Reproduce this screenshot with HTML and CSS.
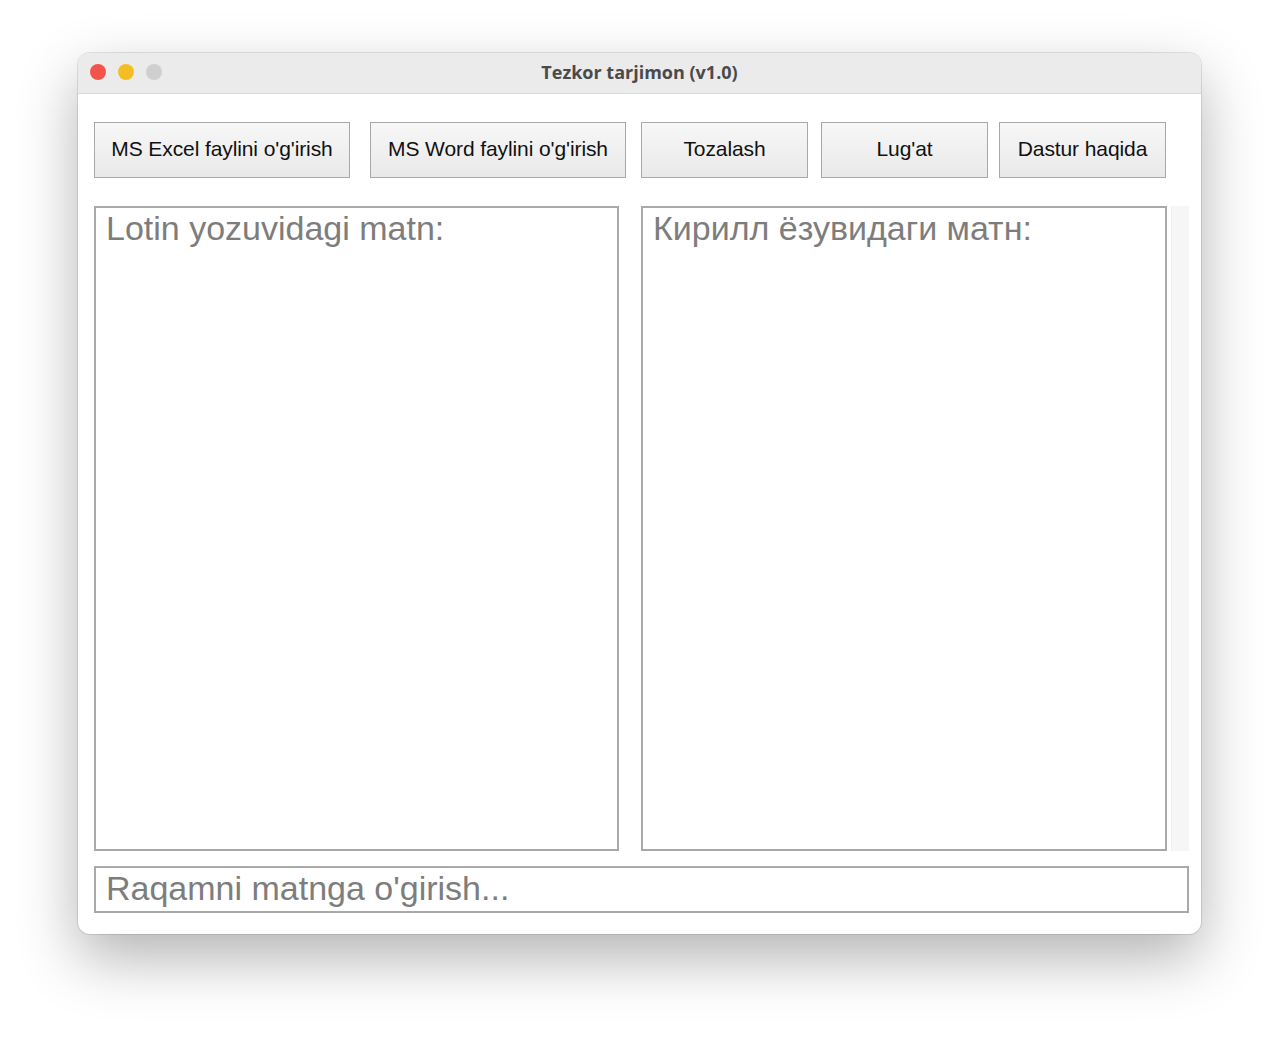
FILE: index.html
```html
<!DOCTYPE html>
<html>
<head>
<meta charset="utf-8">
<link rel="stylesheet" href="styles.css">
</head>
<body>
<div class="window">
  <div class="titlebar">
    <div class="lights">
      <span class="light red"></span>
      <span class="light yellow"></span>
      <span class="light gray"></span>
    </div>
    <div class="title">Tezkor tarjimon (v1.0)</div>
  </div>
  <div class="content">
    <div class="toolbar">
      <div class="btn wide b1">MS Excel faylini o'g'irish</div>
      <div class="btn wide b2">MS Word faylini o'g'irish</div>
      <div class="btn narrow b3">Tozalash</div>
      <div class="btn narrow b4">Lug'at</div>
      <div class="btn narrow b5">Dastur haqida</div>
    </div>
    <div class="panes">
      <div class="pane left">Lotin yozuvidagi matn:</div>
      <div class="pane right">Кирилл ёзувидаги матн:</div>
      <div class="scroll"></div>
    </div>
    <div class="input">Raqamni matnga o'girish...</div>
  </div>
</div>
</body>
</html>
```
FILE: styles.css
```css
html, body {
  margin: 0;
  padding: 0;
  background: #ffffff;
}
body {
  width: 1280px;
  height: 1039px;
  overflow: hidden;
  padding-top: 53px;
  padding-left: 78px;
  box-sizing: border-box;
}
.window {
  width: 1123px;
  height: 881px;
  border-radius: 12px;
  background: #ffffff;
  box-shadow: 0 24px 60px rgba(0,0,0,0.3), 0 0 0 1px rgba(0,0,0,0.1);
  overflow: hidden;
  display: flex;
  flex-direction: column;
}
.titlebar {
  height: 40px;
  background: #ebebeb;
  border-bottom: 1px solid #dadada;
  position: relative;
  display: flex;
  align-items: center;
  justify-content: center;
  flex: none;
}
.lights {
  position: absolute;
  left: 12px;
  top: 11px;
  display: flex;
  gap: 12px;
}
.light {
  width: 16px;
  height: 16px;
  border-radius: 50%;
  display: block;
}
.red { background: #f2544c; }
.yellow { background: #f5bd24; }
.gray { background: #cfcfcf; }
.title {
  font-family: "Open Sans", "Liberation Sans", sans-serif;
  font-weight: 700;
  font-size: 18px;
  color: #4a4a4a;
  margin-top: -2px;
}
.content {
  padding: 28px 0 0 16px;
  display: flex;
  flex-direction: column;
}
.toolbar {
  display: flex;
  height: 56px;
}
.btn {
  box-sizing: border-box;
  height: 56px;
  border: 1px solid #a8a8a8;
  background: linear-gradient(#f7f7f7, #e9e9e9);
  font-family: "Liberation Sans", Arial, sans-serif;
  font-size: 21px;
  letter-spacing: -0.1px;
  color: #111;
  display: flex;
  align-items: center;
  justify-content: center;
  padding-bottom: 2px;
}
.wide { width: 256px; }
.narrow { width: 167px; }
.b1 { margin-right: 20px; }
.b2 { margin-right: 15px; }
.b3 { margin-right: 13px; }
.b4 { margin-right: 11px; }
.panes {
  margin-top: 28px;
  display: flex;
  height: 645px;
}
.pane {
  box-sizing: border-box;
  height: 645px;
  border: 2px solid #a9a9a9;
  background: #fff;
  font-family: "Liberation Sans", Arial, sans-serif;
  font-size: 34px;
  color: #7d7d7d;
  padding: 0 0 0 10px;
  line-height: 40px;
}
.left { width: 525px; margin-right: 22px; }
.right { width: 526px; margin-right: 4px; }
.scroll {
  width: 17px;
  height: 645px;
  background: #f6f6f6;
  border-left: 1px solid #f0f0f0;
}
.input {
  margin-top: 15px;
  box-sizing: border-box;
  width: 1095px;
  height: 47px;
  border: 2px solid #a9a9a9;
  font-family: "Liberation Sans", Arial, sans-serif;
  font-size: 34px;
  color: #7d7d7d;
  padding: 0 0 0 10px;
  line-height: 41px;
}
```
